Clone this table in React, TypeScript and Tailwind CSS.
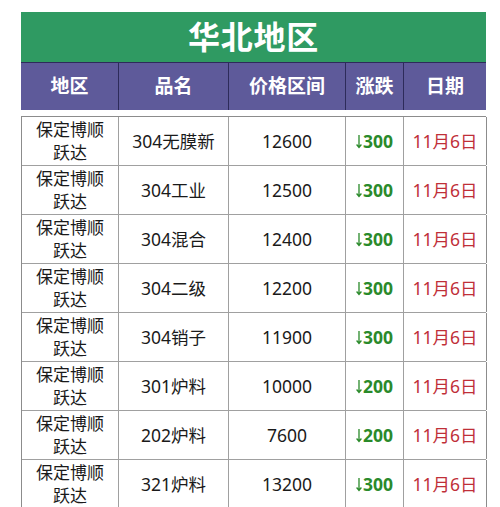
import React from "react";

const rows = [
  { name: "304无膜新", price: "12600", diff: "300" },
  { name: "304工业", price: "12500", diff: "300" },
  { name: "304混合", price: "12400", diff: "300" },
  { name: "304二级", price: "12200", diff: "300" },
  { name: "304销子", price: "11900", diff: "300" },
  { name: "301炉料", price: "10000", diff: "200" },
  { name: "202炉料", price: "7600", diff: "200" },
  { name: "321炉料", price: "13200", diff: "300" },
];

const cols = "grid grid-cols-[97px_110px_117px_58px_83px]";
const font = { fontFamily: '"Noto Sans", "Noto Sans CJK SC", sans-serif' };

// thin down arrow like the one in the sheet
const Down = () => (
  <svg width="6" height="15" viewBox="0 0 6 15" className="mr-[1px]">
    <path d="M3 1v12.5M0.6 10.5 3 13.5 5.4 10.5" stroke="currentColor" strokeWidth="1.3" fill="none" />
  </svg>
);

export default function App() {
  return (
    <div className="h-[507px] w-[500px] overflow-hidden bg-white pt-3 pl-[21px]" style={font}>
      <div className="w-[465px]">
        <div className="flex h-[50px] items-center justify-center bg-[#2f9a62] text-[32px] font-bold tracking-wide text-white">
          华北地区
        </div>
        <div className={`${cols} h-[48px] border-t border-[#2d2b5a] bg-[#5e5a9a] text-[19px] font-bold text-white`}>
          {["地区", "品名", "价格区间", "涨跌", "日期"].map((h, i) => (
            <div key={h} className={`flex items-center justify-center ${i > 0 ? "border-l border-[#2d2b5a]" : ""}`}>
              {h}
            </div>
          ))}
        </div>
        <div className="mt-[6px] border-l border-t border-[#8c8c8c]">
          {rows.map((r) => (
            <div key={r.name} className={`${cols} h-[49px] border-b border-[#a0a0a0] text-[17.5px] text-[#1a1a1a]`}>
              <div className="flex flex-col items-center justify-center border-r border-[#a0a0a0] text-[17px] leading-[23px]">
                <span>保定博顺</span>
                <span>跃达</span>
              </div>
              <div className="flex items-center justify-center border-r border-[#a0a0a0]">{r.name}</div>
              <div className="flex items-center justify-center border-r border-[#a0a0a0]">{r.price}</div>
              <div className="flex items-center justify-center border-r border-[#a0a0a0] font-bold text-[#2a8a2a]">
                <Down />
                {r.diff}
              </div>
              <div className="flex items-center justify-center border-r border-[#8c8c8c] text-[#bf2f38]">11月6日</div>
            </div>
          ))}
        </div>
      </div>
    </div>
  );
}
